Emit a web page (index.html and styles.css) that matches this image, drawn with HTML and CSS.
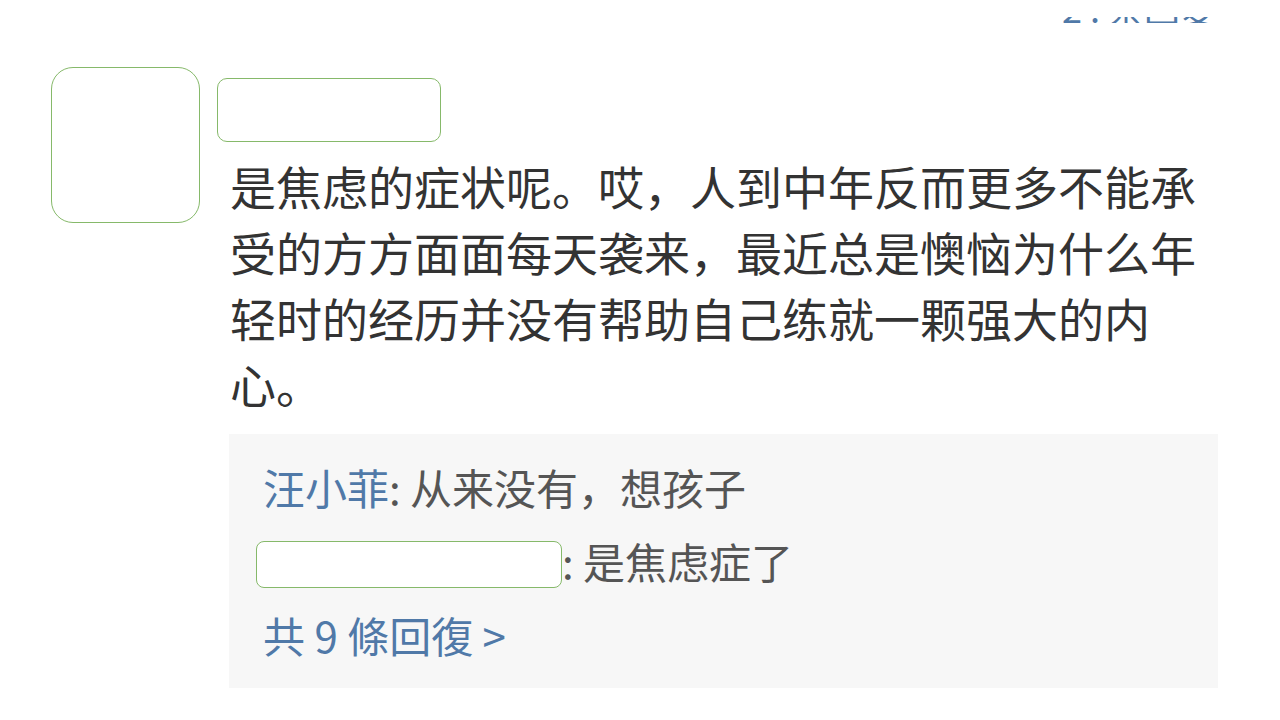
FILE: index.html
```html
<!DOCTYPE html>
<html lang="zh">
<head>
    <meta charset="UTF-8">
    <meta name="viewport" content="width=device-width, initial-scale=1.0">
    <title>评论</title>
    <link rel="stylesheet" href="styles.css">
</head>
<body>
    <!-- footer of the previous comment, scrolled almost out of view -->
    <div class="prev-clip">
        <div class="prev-footer">2 . 条回复</div>
    </div>

    <div class="comment">
        <div class="avatar"></div>
        <div class="comment-body">
            <div class="name-box"></div>
            <p class="comment-text">是焦虑的症状呢。哎，人到中年反而更多不能承受的方方面面每天袭来，最近总是懊恼为什么年轻时的经历并没有帮助自己练就一颗强大的内心。</p>

            <div class="replies">
                <p class="reply"><span class="reply-name">汪小菲</span>: 从来没有，想孩子</p>
                <p class="reply"><span class="reply-box"></span>: 是焦虑症了</p>
                <p class="reply more">共 9 條回復 &gt;</p>
            </div>
        </div>
    </div>
</body>
</html>
```

FILE: styles.css
```css
* {
    padding: 0;
    margin: 0;
    box-sizing: border-box;
}

body {
    font-family: "Noto Sans CJK SC", "Noto Sans", sans-serif;
    background-color: #fff;
    color: #333;
}

.prev-clip {
    display: flex;
    justify-content: flex-end;
    align-items: flex-end;
    height: 6px;
    margin-top: 17px;
    overflow: hidden;
    padding-right: 64px;
}

.prev-footer {
    flex-shrink: 0;
    height: 36px;
    margin-bottom: -2px;
    font-size: 36px;
    line-height: 36px;
    color: #5079a8;
    white-space: nowrap;
}

.comment {
    display: flex;
    margin-top: 44px;
    padding-left: 51px;
    padding-right: 62px;
    gap: 17px;
}

.avatar {
    width: 149px;
    height: 156px;
    flex-shrink: 0;
    border: 1px solid #86b96a;
    border-radius: 22px;
}

.comment-body {
    flex: 1;
    margin-top: 11px;
}

.name-box {
    width: 224px;
    height: 64px;
    border: 1px solid #86b96a;
    border-radius: 10px;
}

.comment-text {
    margin: 10px 0 0 13px;
    font-size: 46px;
    line-height: 66px;
    color: #333;
}

.replies {
    margin: 18px 0 0 12px;
    padding: 16px 34px;
    background-color: #f7f7f7;
}

.reply {
    font-size: 42px;
    line-height: 74px;
    color: #555;
    white-space: nowrap;
}

.reply-name {
    color: #5079a8;
}

.reply-box {
    display: inline-block;
    width: 306px;
    height: 47px;
    margin-left: -7px;
    vertical-align: -9px;
    border: 1px solid #86b96a;
    border-radius: 8px;
    background-color: #fff;
}

.more {
    color: #5079a8;
}
```
